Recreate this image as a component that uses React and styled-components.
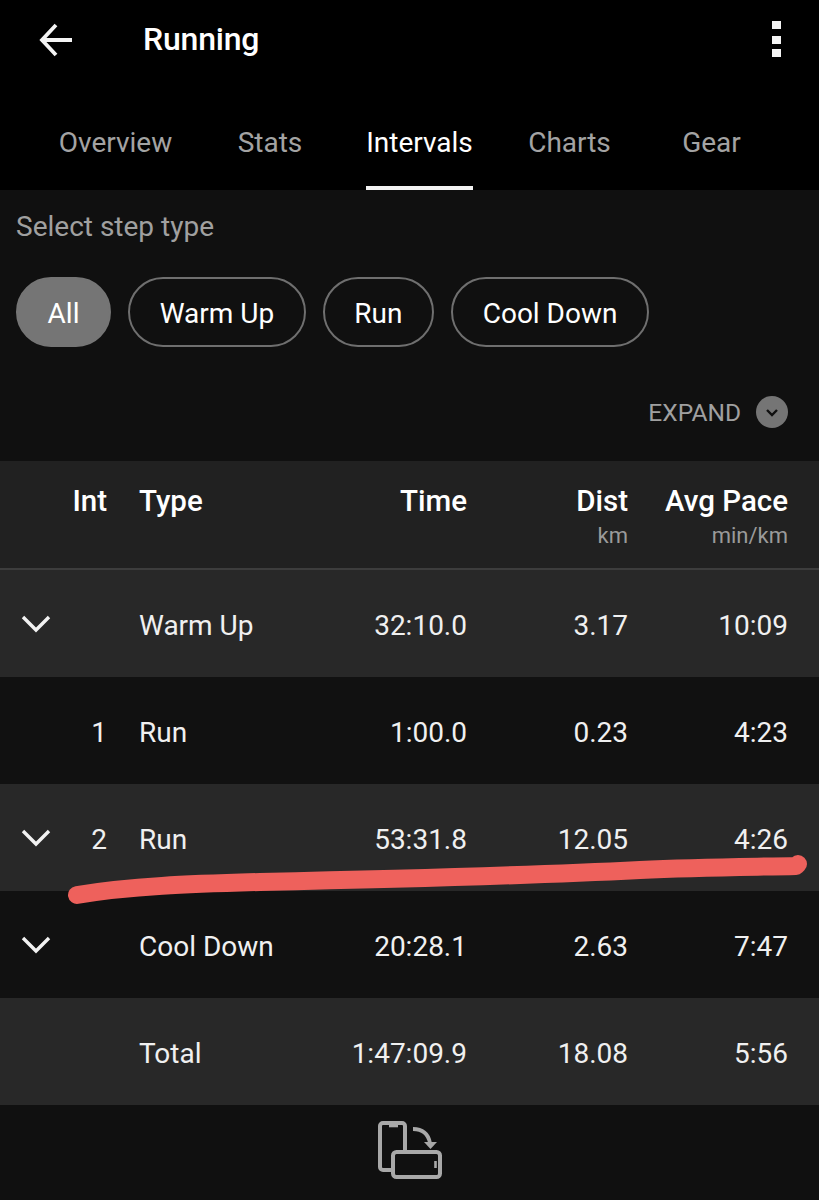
import React from 'react'
import styled, { createGlobalStyle } from 'styled-components'

const GlobalStyle = createGlobalStyle`
  html, body {
    margin: 0;
    padding: 0;
    background: #101010;
  }
  body {
    font-family: Roboto, "Liberation Sans", sans-serif;
  }
`

const Page = styled.div`
  position: relative;
  width: 819px;
  height: 1200px;
  overflow: hidden;
  background: #101010;
  color: #fff;
`

const Header = styled.header`
  background: #000;
  height: 190px;
  display: flex;
  flex-direction: column;
`

const TopBar = styled.div`
  height: 80px;
  display: flex;
  align-items: center;
  padding: 0 38px 0 39px;
`

const Title = styled.h1`
  margin: 0 0 3px 68px;
  flex: 1;
  font-size: 32px;
  line-height: 40px;
  font-weight: 500;
  letter-spacing: -0.2px;
`

const Tabs = styled.nav`
  height: 110px;
  display: grid;
  grid-template-columns: 58px 115px 65px 64px 64px 107px 55px 83px 71px 59px;
`

const Tab = styled.div`
  grid-column: ${props => props.$col};
  display: flex;
  justify-content: center;
  padding-top: 46px;
  height: 110px;
  box-sizing: border-box;
  font-size: 28px;
  line-height: 34px;
  white-space: nowrap;
  color: ${props => (props.$active ? '#fff' : '#a3a3a3')};
  border-bottom: 4px solid ${props => (props.$active ? '#f2f2f2' : 'transparent')};
`

const Filters = styled.section`
  height: 271px;
  padding: 21px 31px 0 16px;
  box-sizing: border-box;
`

const Label = styled.div`
  font-size: 28px;
  line-height: 32px;
  color: #a0a0a0;
`

const Pills = styled.div`
  display: flex;
  gap: 17px;
  margin-top: 34px;
`

const Pill = styled.div`
  height: 70px;
  box-sizing: border-box;
  padding: 3px 29.6px 0;
  display: flex;
  align-items: center;
  border-radius: 35px;
  font-size: 28px;
  color: #fff;
  background: ${props => (props.$active ? '#757575' : 'transparent')};
  border: 2px solid ${props => (props.$active ? '#757575' : '#6f6f6f')};
`

const Expand = styled.div`
  display: flex;
  justify-content: flex-end;
  align-items: center;
  gap: 15px;
  margin-top: 49px;
  font-size: 24.5px;
  color: #a0a0a0;
`

const ExpandDot = styled.div`
  width: 32px;
  height: 32px;
  border-radius: 50%;
  background: #757575;
  display: flex;
  align-items: center;
  justify-content: center;
`

const RowGrid = styled.div`
  box-sizing: border-box;
  display: grid;
  grid-template-columns: 72px 35px 200px 160px 161px 160px;
`

const Row = styled(RowGrid)`
  height: 107px;
  align-items: center;
  background: ${props => (props.$shade ? '#282828' : '#111')};
`

const HeadRow = styled(RowGrid)`
  height: 109px;
  padding-top: 23px;
  align-items: start;
  background: #212121;
  border-bottom: 2px solid #3d3d3d;
`

const Cell = styled.div`
  font-size: 28px;
  line-height: 34px;
  padding-top: 4px;
  white-space: nowrap;
  color: #f0f0f0;
  text-align: ${props => (props.$left ? 'left' : 'right')};
  padding-left: ${props => (props.$left ? 32 : 0)}px;
`

const HeadCell = styled.div`
  font-size: 29.5px;
  line-height: 34px;
  font-weight: 500;
  white-space: nowrap;
  color: #fff;
  text-align: ${props => (props.$left ? 'left' : 'right')};
  padding-left: ${props => (props.$left ? 32 : 0)}px;
`

const Unit = styled.div`
  font-size: 22px;
  line-height: 26px;
  margin-top: 5px;
  font-weight: 400;
  color: #9a9a9a;
`

const ChevronCell = styled.div`
  padding-left: 21px;
  display: flex;
  align-items: center;
`

const Footer = styled.footer`
  height: 95px;
  display: flex;
  justify-content: center;
  padding-top: 15px;
  box-sizing: border-box;
`

const Highlight = styled.svg`
  position: absolute;
  left: 0;
  top: 840px;
  width: 819px;
  height: 70px;
  pointer-events: none;
`

const Chevron = () => (
  <svg width="30" height="18" viewBox="0 0 30 18" fill="none">
    <path d="M2 2 L15 15 L28 2" stroke="#f2f2f2" strokeWidth="3.4" />
  </svg>
)

const BackArrow = () => (
  <svg width="36" height="36" viewBox="0 0 36 36" fill="none">
    <path d="M33 18 H4 M17 3 L3 18 L17 33" stroke="#f4f4f4" strokeWidth="3.8" />
  </svg>
)

const Kebab = () => (
  <svg width="9" height="38" viewBox="0 0 9 38" fill="#f4f4f4">
    <rect width="9" height="8" x="0" y="0" />
    <rect width="9" height="8" x="0" y="15" />
    <rect width="9" height="8" x="0" y="28" />
  </svg>
)

const RotateIcon = () => (
  <svg width="66" height="60" viewBox="0 0 66 60" fill="none" stroke="#a8a8a8">
    <path d="M28 30 V6 a3 3 0 0 0 -3 -3 H6 a3 3 0 0 0 -3 3 V47 a3 3 0 0 0 3 3 H14" strokeWidth="4" />
    <path d="M12 6 H21" strokeWidth="2.6" />
    <rect x="16" y="32" width="47" height="25" rx="3.5" strokeWidth="4" />
    <path d="M58.5 41 V48" strokeWidth="2.6" />
    <path d="M36 9 C45 9 51 13 53 23" strokeWidth="3.8" />
    <path d="M47 22 H60 L53.5 29 Z" fill="#a8a8a8" stroke="none" />
  </svg>
)

const rows = [
  { chev: true, int: '', type: 'Warm Up', time: '32:10.0', dist: '3.17', pace: '10:09', shade: true },
  { chev: false, int: '1', type: 'Run', time: '1:00.0', dist: '0.23', pace: '4:23', shade: false },
  { chev: true, int: '2', type: 'Run', time: '53:31.8', dist: '12.05', pace: '4:26', shade: true },
  { chev: true, int: '', type: 'Cool Down', time: '20:28.1', dist: '2.63', pace: '7:47', shade: false },
  { chev: false, int: '', type: 'Total', time: '1:47:09.9', dist: '18.08', pace: '5:56', shade: true },
]

export default function App() {
  return (
    <Page>
      <GlobalStyle />
      <Header>
        <TopBar>
          <BackArrow />
          <Title>Running</Title>
          <Kebab />
        </TopBar>
        <Tabs>
          <Tab $col={2}>Overview</Tab>
          <Tab $col={4}>Stats</Tab>
          <Tab $col={6} $active>Intervals</Tab>
          <Tab $col={8}>Charts</Tab>
          <Tab $col={10}>Gear</Tab>
        </Tabs>
      </Header>

      <Filters>
        <Label>Select step type</Label>
        <Pills>
          <Pill $active>All</Pill>
          <Pill>Warm Up</Pill>
          <Pill>Run</Pill>
          <Pill>Cool Down</Pill>
        </Pills>
        <Expand>
          EXPAND
          <ExpandDot>
            <svg width="14" height="9" viewBox="0 0 14 9" fill="none">
              <path d="M2 2 L7 7 L12 2" stroke="#101010" strokeWidth="2.4" />
            </svg>
          </ExpandDot>
        </Expand>
      </Filters>

      <HeadRow>
        <div />
        <HeadCell>Int</HeadCell>
        <HeadCell $left>Type</HeadCell>
        <HeadCell>Time</HeadCell>
        <HeadCell>
          Dist
          <Unit>km</Unit>
        </HeadCell>
        <HeadCell>
          Avg Pace
          <Unit>min/km</Unit>
        </HeadCell>
      </HeadRow>

      {rows.map(row => (
        <Row key={row.type + row.time} $shade={row.shade}>
          <ChevronCell>{row.chev && <Chevron />}</ChevronCell>
          <Cell>{row.int}</Cell>
          <Cell $left>{row.type}</Cell>
          <Cell>{row.time}</Cell>
          <Cell>{row.dist}</Cell>
          <Cell>{row.pace}</Cell>
        </Row>
      ))}

      <Footer>
        <RotateIcon />
      </Footer>

      <Highlight viewBox="0 840 819 70">
        <path
          d="M77 895 C130 886 190 884 260 882 C400 879 520 876 640 870 C700 867 750 867 796 866 L798 864"
          fill="none"
          stroke="#ee615c"
          strokeWidth="18"
          strokeLinecap="round"
          strokeLinejoin="round"
        />
      </Highlight>
    </Page>
  )
}
